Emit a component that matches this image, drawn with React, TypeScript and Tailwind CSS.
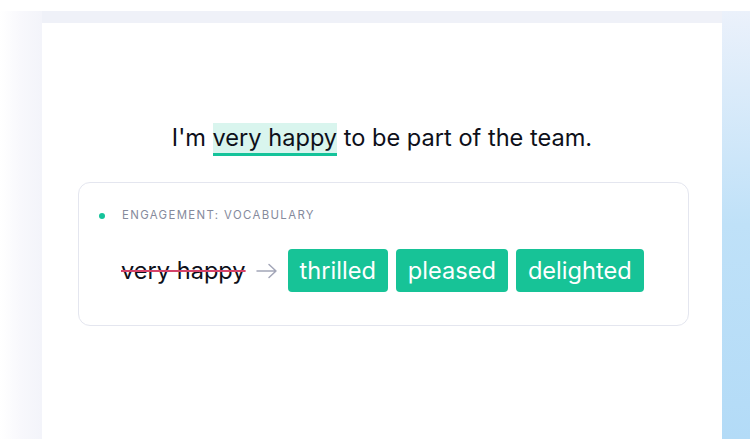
export default function App() {
  const chips = ["thrilled", "pleased", "delighted"];
  return (
    <div
      className="flex h-[439px] w-[750px] overflow-hidden bg-white pt-[11px]"
      style={{ fontFamily: "Inter, 'Noto Sans', sans-serif" }}
    >
      <div className="w-[42px] shrink-0 bg-gradient-to-r from-white via-[#f8f8fc] to-[#f3f4fa]" />
      <div className="flex w-[680px] shrink-0 flex-col">
        <div className="h-[12px] bg-[#eff1f8]" />
        <div className="flex flex-1 flex-col bg-white">
          <p className="mt-[99px] text-center text-[23.6px] leading-[31px] text-[#0e101a]">
            I'm{" "}
            <span className="border-b-[3px] border-[#15c39a] bg-[#d9f5ee] pb-[1px]">
              very happy
            </span>{" "}
            to be part of the team.
          </p>
          <div className="mx-[36px] mt-[29px] h-[144px] w-[611px] rounded-[12px] border border-[#e4e6ef] px-[19px] pt-[24px]">
            <div className="flex items-center gap-[17px] pl-[1px]">
              <span className="h-[6px] w-[6px] rounded-full bg-[#15c39a]" />
              <span className="text-[11.4px] tracking-[0.12em] text-[#858a9c]">
                ENGAGEMENT: VOCABULARY
              </span>
            </div>
            <div className="mt-[25px] flex items-center pl-[23px]">
              <span className="text-[23.6px] text-[#0e101a] line-through decoration-[#d5436a] decoration-2">
                very happy
              </span>
              <svg
                viewBox="0 0 24 16"
                className="ml-[9px] mr-[9px] h-[16px] w-[24px]"
                fill="none"
                stroke="#a3a6b8"
                strokeWidth="1.5"
                strokeLinecap="round"
                strokeLinejoin="round"
              >
                <path d="M2 8h19M14 1.5L21 8l-7 6.5" />
              </svg>
              <div className="flex gap-[8px]">
                {chips.map((c) => (
                  <span
                    key={c}
                    className="flex h-[43px] items-center rounded-[4px] bg-[#17c397] px-[12px] text-[23.6px] text-white"
                  >
                    {c}
                  </span>
                ))}
              </div>
            </div>
          </div>
        </div>
      </div>
      <div className="w-[28px] shrink-0 bg-gradient-to-b from-[#ebf1fb] via-[#bfe1f8] to-[#b3dbf7]" />
    </div>
  );
}
